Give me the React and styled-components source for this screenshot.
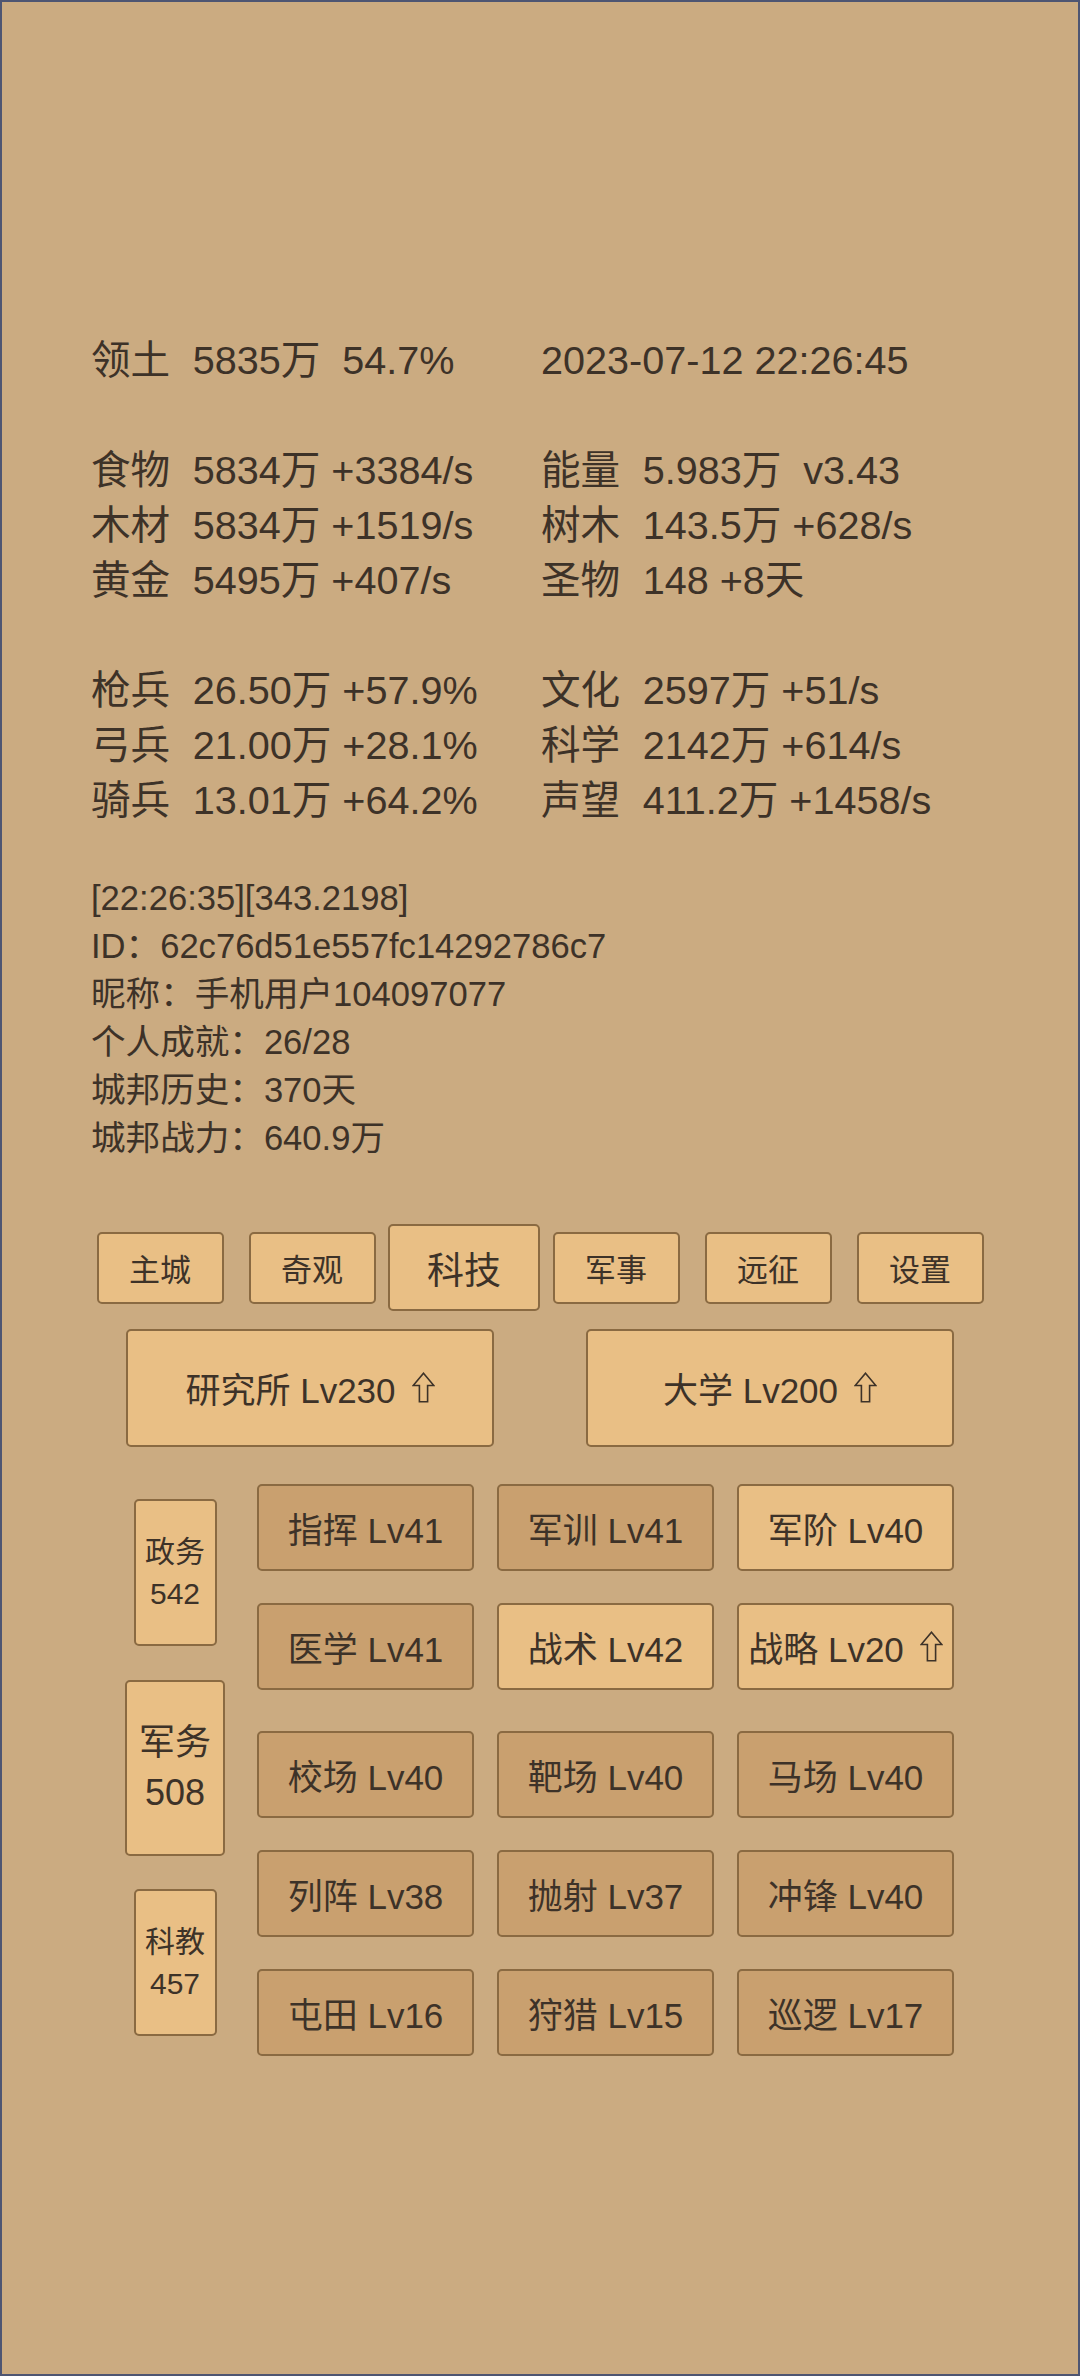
import React from "react";
import styled, { createGlobalStyle } from "styled-components";

const GlobalStyle = createGlobalStyle`
  html, body { margin: 0; padding: 0; background: #cbab81; }
  body { font-family: "Liberation Sans", "Noto Sans CJK SC", sans-serif; }
`;

const Page = styled.div`
  box-sizing: border-box;
  width: 1080px;
  height: 2376px;
  border: 2px solid #4e5572;
  background: #cbab81;
  color: #3d3228;
  font-family: "Liberation Sans", "Noto Sans CJK SC", sans-serif;
  padding-top: 330.5px;
  overflow: hidden;
`;

const Stats = styled.div`
  display: flex;
  flex-direction: column;
  gap: 55px;
  padding-left: 89px;
`;

const StatGroup = styled.div`
  display: grid;
  grid-template-columns: 450px auto;
  font-size: 39.6px;
  line-height: 55px;
  white-space: pre;
`;

const StatCell = styled.div`
  display: flex;
`;

const StatLabel = styled.span`
  margin-right: 22.5px;
`;

const Info = styled.div`
  margin-top: 46px;
  padding-left: 89px;
  font-size: 34.6px;
  line-height: 48px;
`;

const InfoLine = styled.div``;

const TabBar = styled.div`
  margin-top: 62.5px;
  margin-left: 82px;
  display: grid;
  grid-template-columns: repeat(6, 152px);
  height: 87px;
  align-items: center;
  justify-items: center;
`;

const Btn = styled.div`
  box-sizing: border-box;
  display: flex;
  flex-direction: column;
  align-items: center;
  justify-content: center;
  border: 2px solid #8a6a42;
  border-radius: 5px;
  background: ${(p) => (p.$dark ? "#c9a06f" : "#e9bf85")};
  white-space: pre;
`;

const Tab = styled(Btn)`
  width: ${(p) => (p.$active ? "152px" : "127px")};
  height: ${(p) => (p.$active ? "87px" : "72px")};
  font-size: ${(p) => (p.$active ? "37px" : "31px")};
`;

const BigRow = styled.div`
  margin-top: 17.5px;
  margin-left: 78px;
  display: grid;
  grid-template-columns: repeat(2, 460px);
  justify-items: center;
`;

const BigBtn = styled(Btn)`
  width: 368px;
  height: 118px;
  font-size: 35px;
  flex-direction: row;
`;

const ArrowSvg = styled.svg`
  width: 23px;
  height: 31px;
  margin-left: 16px;
  flex: none;
`;

function UpArrow() {
  return (
    <ArrowSvg viewBox="0 0 23 31" aria-hidden="true">
      <path
        d="M11.5 1.2 L21.8 13.5 L15.6 13.5 L15.6 29.8 L7.4 29.8 L7.4 13.5 L1.2 13.5 Z"
        fill="none"
        stroke="#3d3228"
        strokeWidth="1.6"
        strokeLinejoin="miter"
      />
    </ArrowSvg>
  );
}

const TechSection = styled.div`
  margin-top: 37px;
  margin-left: 123px;
  display: flex;
  gap: 32px;
`;

const SideCol = styled.div`
  width: 100px;
  display: flex;
  flex-direction: column;
  align-items: center;
  padding-top: 15.5px;
  gap: 33.5px;
`;

const SideBtn = styled(Btn)`
  width: ${(p) => (p.$active ? "100px" : "83px")};
  height: ${(p) => (p.$active ? "176px" : "147px")};
  font-size: ${(p) => (p.$active ? "36px" : "30px")};
  line-height: ${(p) => (p.$active ? "50px" : "42px")};
  text-align: center;
`;

const TechGrid = styled.div`
  display: flex;
  flex-direction: column;
  gap: 41px;
`;

const TechGroup = styled.div`
  display: grid;
  grid-template-columns: repeat(3, 217px);
  grid-auto-rows: 87px;
  column-gap: 23px;
  row-gap: 32px;
`;

const TechBtn = styled(Btn)`
  font-size: 35px;
  flex-direction: row;
`;

const statGroups = [
  [["领土", "5835万  54.7%", "", "2023-07-12 22:26:45"]],
  [
    ["食物", "5834万 +3384/s", "能量", "5.983万  v3.43"],
    ["木材", "5834万 +1519/s", "树木", "143.5万 +628/s"],
    ["黄金", "5495万 +407/s", "圣物", "148 +8天"],
  ],
  [
    ["枪兵", "26.50万 +57.9%", "文化", "2597万 +51/s"],
    ["弓兵", "21.00万 +28.1%", "科学", "2142万 +614/s"],
    ["骑兵", "13.01万 +64.2%", "声望", "411.2万 +1458/s"],
  ],
];

const infoLines = [
  "[22:26:35][343.2198]",
  "ID：62c76d51e557fc14292786c7",
  "昵称：手机用户104097077",
  "个人成就：26/28",
  "城邦历史：370天",
  "城邦战力：640.9万",
];

const tabs = ["主城", "奇观", "科技", "军事", "远征", "设置"];

const sides = [
  { name: "政务", n: 542 },
  { name: "军务", n: 508, active: true },
  { name: "科教", n: 457 },
];

const techGroups = [
  [
    { t: "指挥 Lv41", dark: true },
    { t: "军训 Lv41", dark: true },
    { t: "军阶 Lv40" },
    { t: "医学 Lv41", dark: true },
    { t: "战术 Lv42" },
    { t: "战略 Lv20", up: true },
  ],
  [
    { t: "校场 Lv40", dark: true },
    { t: "靶场 Lv40", dark: true },
    { t: "马场 Lv40", dark: true },
    { t: "列阵 Lv38", dark: true },
    { t: "抛射 Lv37", dark: true },
    { t: "冲锋 Lv40", dark: true },
    { t: "屯田 Lv16", dark: true },
    { t: "狩猎 Lv15", dark: true },
    { t: "巡逻 Lv17", dark: true },
  ],
];

function Cell({ label, value }) {
  return (
    <StatCell>
      {label ? <StatLabel>{label}</StatLabel> : null}
      <span>{value}</span>
    </StatCell>
  );
}

export default function App() {
  return (
    <>
      <GlobalStyle />
      <Page>
        <Stats>
          {statGroups.map((g, gi) => (
            <StatGroup key={gi}>
              {g.map((r, ri) => (
                <React.Fragment key={ri}>
                  <Cell label={r[0]} value={r[1]} />
                  <Cell label={r[2]} value={r[3]} />
                </React.Fragment>
              ))}
            </StatGroup>
          ))}
        </Stats>
        <Info>
          {infoLines.map((l, i) => (
            <InfoLine key={i}>{l}</InfoLine>
          ))}
        </Info>
        <TabBar>
          {tabs.map((t) => (
            <Tab key={t} $active={t === "科技"}>
              {t}
            </Tab>
          ))}
        </TabBar>
        <BigRow>
          <BigBtn>
            研究所 Lv230
            <UpArrow />
          </BigBtn>
          <BigBtn>
            大学 Lv200
            <UpArrow />
          </BigBtn>
        </BigRow>
        <TechSection>
          <SideCol>
            {sides.map((s) => (
              <SideBtn key={s.name} $active={s.active}>
                <span>{s.name}</span>
                <span>{s.n}</span>
              </SideBtn>
            ))}
          </SideCol>
          <TechGrid>
            {techGroups.map((g, gi) => (
              <TechGroup key={gi}>
                {g.map((b) => (
                  <TechBtn key={b.t} $dark={b.dark}>
                    {b.t}
                    {b.up ? <UpArrow /> : null}
                  </TechBtn>
                ))}
              </TechGroup>
            ))}
          </TechGrid>
        </TechSection>
      </Page>
    </>
  );
}
